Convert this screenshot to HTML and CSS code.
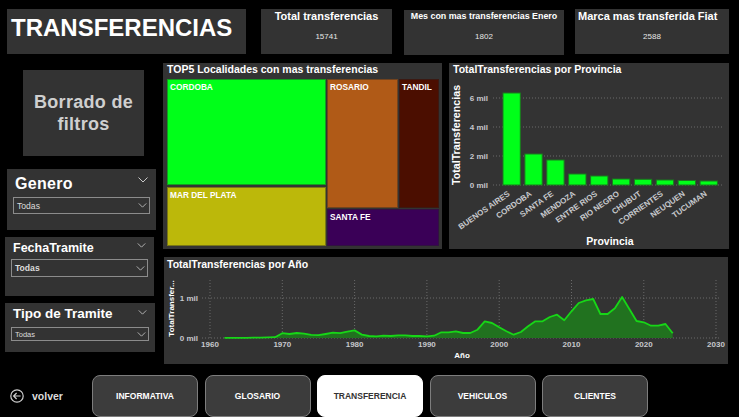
FILE: index.html
```html
<!DOCTYPE html>
<html lang="es">
<head>
<meta charset="utf-8">
<title>Transferencias</title>
<link rel="stylesheet" href="styles.css">
</head>
<body>
<div class="page">
  <header class="top">
    <div class="title-box"><h1>TRANSFERENCIAS</h1></div>
    <div class="kpi kpi-1"><div class="kpi-title">Total transferencias</div><div class="kpi-value">15741</div></div>
    <div class="kpi kpi-2"><div class="kpi-title">Mes con mas transferencias Enero</div><div class="kpi-value">1802</div></div>
    <div class="kpi kpi-3"><div class="kpi-title">Marca mas transferida Fiat</div><div class="kpi-value">2588</div></div>
  </header>

  <main class="main">
    <aside class="side">
      <div class="reset">Borrado de<br>filtros</div>

      <div class="slicer slicer-genero">
        <div class="slicer-head">
          <span class="slicer-title">Genero</span>
          <svg class="chev" width="10" height="6" viewBox="0 0 10 6"><polyline points="0.5,0.5 5,5 9.5,0.5"/></svg>
        </div>
        <div class="dropdown"><span>Todas</span><svg class="chev" width="10" height="6" viewBox="0 0 10 6"><polyline points="0.5,0.5 5,5 9.5,0.5"/></svg></div>
      </div>

      <div class="slicer slicer-fecha">
        <div class="slicer-head">
          <span class="slicer-title">FechaTramite</span>
          <svg class="chev" width="9" height="5" viewBox="0 0 10 6"><polyline points="0.5,0.5 5,5 9.5,0.5"/></svg>
        </div>
        <div class="dropdown"><span>Todas</span><svg class="chev" width="10" height="6" viewBox="0 0 10 6"><polyline points="0.5,0.5 5,5 9.5,0.5"/></svg></div>
      </div>

      <div class="slicer slicer-tipo">
        <div class="slicer-head">
          <span class="slicer-title">Tipo de Tramite</span>
          <svg class="chev" width="9" height="5" viewBox="0 0 10 6"><polyline points="0.5,0.5 5,5 9.5,0.5"/></svg>
        </div>
        <div class="dropdown"><span>Todas</span><svg class="chev" width="10" height="6" viewBox="0 0 10 6"><polyline points="0.5,0.5 5,5 9.5,0.5"/></svg></div>
      </div>
    </aside>

    <section class="charts">
      <div class="panel treemap">
        <div class="panel-title">TOP5 Localidades con mas transferencias</div>
        <div class="tm-area">
          <div class="tm-left">
            <div class="tile t-cordoba">CORDOBA</div>
            <div class="tile t-mdp">MAR DEL PLATA</div>
          </div>
          <div class="tm-right">
            <div class="tm-top">
              <div class="tile t-rosario">ROSARIO</div>
              <div class="tile t-tandil">TANDIL</div>
            </div>
            <div class="tile t-santafe">SANTA FE</div>
          </div>
        </div>
      </div>

      <div class="panel bars">
        <svg width="280" height="186" viewBox="0 0 280 186">
          <text class="ttl" x="4" y="10">TotalTransferencias por Provincia</text>
          <text class="axis-title" font-size="10.7" text-anchor="middle" transform="translate(11,72) rotate(-90)">TotalTransferencias</text>
          <g class="grid">
            <line x1="44" y1="35" x2="275" y2="35"/>
            <line x1="44" y1="64" x2="275" y2="64"/>
            <line x1="44" y1="93" x2="275" y2="93"/>
            <line x1="44" y1="122" x2="275" y2="122"/>
          </g>
          <g class="tick" text-anchor="end">
            <text x="39" y="38">6 mil</text>
            <text x="39" y="67">4 mil</text>
            <text x="39" y="96">2 mil</text>
            <text x="39" y="125">0 mil</text>
          </g>
          <g class="bar">
            <rect x="54" y="30" width="17.3" height="92"/>
            <rect x="75.9" y="91" width="17.3" height="31"/>
            <rect x="97.8" y="97" width="17.3" height="25"/>
            <rect x="119.7" y="111" width="17.3" height="11"/>
            <rect x="141.6" y="113" width="17.3" height="9"/>
            <rect x="163.5" y="116" width="17.3" height="6"/>
            <rect x="185.4" y="116.3" width="17.3" height="5.7"/>
            <rect x="207.3" y="117" width="17.3" height="5"/>
            <rect x="229.2" y="117.5" width="17.3" height="4.5"/>
            <rect x="251.1" y="118" width="17.3" height="4"/>
          </g>
          <g class="tick" text-anchor="end">
            <text transform="translate(61.4,132) rotate(-35)">BUENOS AIRES</text>
            <text transform="translate(83.3,132) rotate(-35)">CORDOBA</text>
            <text transform="translate(105.2,132) rotate(-35)">SANTA FE</text>
            <text transform="translate(127.1,132) rotate(-35)">MENDOZA</text>
            <text transform="translate(149,132) rotate(-35)">ENTRE RIOS</text>
            <text transform="translate(170.9,132) rotate(-35)">RIO NEGRO</text>
            <text transform="translate(192.8,132) rotate(-35)">CHUBUT</text>
            <text transform="translate(214.7,132) rotate(-35)">CORRIENTES</text>
            <text transform="translate(236.6,132) rotate(-35)">NEUQUEN</text>
            <text transform="translate(258.5,132) rotate(-35)">TUCUMAN</text>
          </g>
          <text class="axis-title" font-size="10.5" x="161" y="182" text-anchor="middle">Provincia</text>
        </svg>
      </div>

      <div class="panel line">
        <svg width="564" height="107" viewBox="0 0 564 107">
          <text class="ttl" x="3" y="11">TotalTransferencias por Año</text>
          <text class="axis-title" font-size="8" text-anchor="middle" transform="translate(9.5,51.5) rotate(-90)">TotalTransfer...</text>
          <g class="grid">
            <line x1="38" y1="41" x2="556" y2="41"/>
            <line x1="38" y1="81" x2="556" y2="81"/>
            <line x1="46" y1="23" x2="46" y2="81"/>
            <line x1="118.3" y1="23" x2="118.3" y2="81"/>
            <line x1="190.6" y1="23" x2="190.6" y2="81"/>
            <line x1="262.9" y1="23" x2="262.9" y2="81"/>
            <line x1="335.2" y1="23" x2="335.2" y2="81"/>
            <line x1="407.5" y1="23" x2="407.5" y2="81"/>
            <line x1="479.8" y1="23" x2="479.8" y2="81"/>
            <line x1="552" y1="23" x2="552" y2="81"/>
          </g>
          <g class="tick" text-anchor="end">
            <text x="34" y="44">1 mil</text>
            <text x="34" y="84">0 mil</text>
          </g>
          <g class="tick" text-anchor="middle">
            <text x="46" y="90">1960</text>
            <text x="118.3" y="90">1970</text>
            <text x="190.6" y="90">1980</text>
            <text x="262.9" y="90">1990</text>
            <text x="335.2" y="90">2000</text>
            <text x="407.5" y="90">2010</text>
            <text x="479.8" y="90">2020</text>
            <text x="552" y="90">2030</text>
          </g>
          <polygon class="area" points="60.46,81 60.46,80.8 67.69,80.8 74.92,80.8 82.15,80.8 89.38,80.7 96.61,80.6 103.84,80.4 111.07,80.2 118.3,76.2 125.53,77 132.76,76 139.99,76.6 147.22,77.8 154.45,78.2 161.68,77 168.91,75.7 176.14,76.2 183.37,74.7 190.6,73.4 197.83,77.6 205.06,79 212.29,79.3 219.52,78.7 226.75,79 233.98,78.3 241.21,78.3 248.44,79 255.67,79 262.9,79.3 270.13,78.7 277.36,75.3 284.59,75.3 291.82,74.3 299.05,76 306.28,76 313.51,72.7 320.74,64.3 327.97,66 335.2,70.3 342.43,74.3 349.66,77.7 356.89,75 364.12,69.3 371.35,64.3 378.58,64.3 385.81,60 393.04,57.7 400.27,63.3 407.5,54.3 414.73,46 421.96,43.3 429.19,42 436.42,57 443.65,57 450.88,51.3 458.11,40 465.34,52 472.57,64 479.8,65.3 487.03,68.7 494.26,68.7 501.49,67 508.72,76.3 508.72,81"/>
          <polyline class="trend" points="60.46,80.8 67.69,80.8 74.92,80.8 82.15,80.8 89.38,80.7 96.61,80.6 103.84,80.4 111.07,80.2 118.3,76.2 125.53,77 132.76,76 139.99,76.6 147.22,77.8 154.45,78.2 161.68,77 168.91,75.7 176.14,76.2 183.37,74.7 190.6,73.4 197.83,77.6 205.06,79 212.29,79.3 219.52,78.7 226.75,79 233.98,78.3 241.21,78.3 248.44,79 255.67,79 262.9,79.3 270.13,78.7 277.36,75.3 284.59,75.3 291.82,74.3 299.05,76 306.28,76 313.51,72.7 320.74,64.3 327.97,66 335.2,70.3 342.43,74.3 349.66,77.7 356.89,75 364.12,69.3 371.35,64.3 378.58,64.3 385.81,60 393.04,57.7 400.27,63.3 407.5,54.3 414.73,46 421.96,43.3 429.19,42 436.42,57 443.65,57 450.88,51.3 458.11,40 465.34,52 472.57,64 479.8,65.3 487.03,68.7 494.26,68.7 501.49,67 508.72,76.3"/>
          <text class="axis-title" font-size="8" x="298" y="101" text-anchor="middle">Año</text>
        </svg>
      </div>
    </section>
  </main>

  <nav class="nav">
    <div class="back">
      <svg width="14" height="14" viewBox="0 0 14 14"><circle cx="7" cy="7" r="6.2"/><path d="M10.6 7H3.6M6.6 4L3.6 7L6.6 10"/></svg>
      <span>volver</span>
    </div>
    <div class="nav-btns">
      <div class="nav-btn">INFORMATIVA</div>
      <div class="nav-btn">GLOSARIO</div>
      <div class="nav-btn active">TRANSFERENCIA</div>
      <div class="nav-btn">VEHICULOS</div>
      <div class="nav-btn">CLIENTES</div>
    </div>
  </nav>
</div>
</body>
</html>
```

FILE: styles.css
```css
* { box-sizing: border-box; }
html, body { margin: 0; padding: 0; background: #000; }
body {
  width: 739px;
  height: 417px;
  overflow: hidden;
  font-family: "Liberation Sans", Arial, sans-serif;
  color: #fff;
}
.page { width: 739px; height: 417px; display: flex; flex-direction: column; }

/* top row */
.top { display: flex; align-items: flex-start; height: 63px; padding-top: 9px; flex-shrink: 0; }
.title-box {
  margin-left: 7px; width: 239px; height: 45px; background: #333;
  display: flex; align-items: center; padding: 0 0 7px 4px;
}
.title-box h1 { margin: 0; font-size: 24px; font-weight: bold; line-height: 26px; color: #fff; letter-spacing: 0; }
.kpi { height: 45px; background: #333; display: flex; flex-direction: column; align-items: center; }
.kpi-1 { margin-left: 15px; width: 131px; }
.kpi-2 { margin-left: 12px; width: 160px; margin-top: 1px; }
.kpi-3 { margin-left: 11px; width: 154px; align-items: flex-start; padding-left: 3px; }
.kpi-title { font-weight: bold; font-size: 11px; line-height: 13px; margin-top: 1px; white-space: nowrap; }
.kpi-2 .kpi-title { font-size: 8.9px; line-height: 11px; }
.kpi-value { font-size: 8px; line-height: 10px; margin-top: 9px; color: #e6e6e6; }
.kpi-2 .kpi-value { margin-top: 10px; }
.kpi-3 .kpi-value { align-self: center; margin-left: -3px; }

/* main */
.main { display: flex; height: 312px; flex-shrink: 0; }
.side { width: 160px; flex-shrink: 0; display: flex; flex-direction: column; align-items: flex-start; }
.reset {
  margin: 7px 0 0 23px; width: 121px; height: 86px; background: #333;
  display: flex; align-items: center; justify-content: center; text-align: center;
  font-weight: bold; font-size: 18px; line-height: 22px; color: #cfcfcf; letter-spacing: 0.3px;
}
.slicer { background: #333; padding: 0 6px; }
.slicer-head { display: flex; justify-content: space-between; align-items: flex-start; padding-left: 2px; }
.slicer-title { font-weight: bold; color: #fff; white-space: nowrap; }
.chev { display: block; flex-shrink: 0; }
.chev polyline { fill: none; stroke: #c8c8c8; stroke-width: 1; }
.slicer-head .chev { margin-right: 2px; }
.dropdown {
  border: 1px solid #8c8c8c; display: flex; align-items: center; justify-content: space-between;
  padding: 0 2px 0 3px; color: #dcdcdc;
}
.dropdown .chev { width: 9px; height: 5px; }

.slicer-genero { margin: 13px 0 0 7px; width: 149px; height: 61px; padding-top: 5px; }
.slicer-genero .slicer-title { font-size: 16px; line-height: 20px; letter-spacing: 0.3px; }
.slicer-genero .slicer-head { height: 20px; margin-bottom: 3px; }
.slicer-genero .slicer-head .chev { margin-top: 3px; }
.slicer-genero .dropdown { height: 17px; font-size: 8.6px; }

.slicer-fecha { margin: 7px 0 0 5px; width: 149px; height: 59px; padding-top: 4px; }
.slicer-fecha .slicer-title { font-size: 12.5px; line-height: 15px; }
.slicer-fecha .slicer-head { height: 15px; margin-bottom: 3px; }
.slicer-fecha .slicer-head .chev { margin-top: 2px; }
.slicer-fecha .dropdown { height: 18px; font-size: 8.6px; font-weight: bold; }

.slicer-tipo { margin: 7px 0 0 5px; width: 150px; height: 49px; padding-top: 3px; }
.slicer-tipo .slicer-title { font-size: 13.5px; line-height: 16px; }
.slicer-tipo .slicer-head { height: 16px; margin-bottom: 5px; }
.slicer-tipo .slicer-head .chev { margin-top: 4px; }
.slicer-tipo .dropdown { height: 14px; font-size: 7.5px; }

/* charts */
.charts {
  margin-left: 3px; display: grid;
  grid-template-columns: 279px 280px; grid-template-rows: 186px 107px;
  column-gap: 7px; row-gap: 8px; align-content: start;
}
.panel { background: #333; overflow: hidden; }
.panel svg { display: block; }
.line { grid-column: 1 / 3; margin-left: 1px; width: 564px; }

.treemap { padding: 0 3px 3px 4px; }
.panel-title { font-weight: bold; font-size: 10.5px; line-height: 13px; height: 16px; white-space: nowrap; }
.tm-area { display: flex; gap: 1px; height: 167px; }
.tm-left { width: 159px; display: flex; flex-direction: column; gap: 2px; }
.tm-right { width: 112px; display: flex; flex-direction: column; gap: 1px; }
.tm-top { height: 129px; display: flex; gap: 1px; flex-shrink: 0; }
.tile {
  font-weight: bold; font-size: 8.3px; line-height: 10px; color: #fff;
  padding: 3px 0 0 3px; white-space: nowrap; overflow: hidden;
  box-shadow: inset 0 0 0 1px rgba(40, 40, 40, 0.45);
}
.t-cordoba { height: 106px; flex-shrink: 0; background: #00ff19; }
.t-mdp { flex: 1; background: #bcb80a; }
.t-rosario { width: 71px; background: #b05a17; }
.t-tandil { width: 40px; background: #4b0e00; }
.t-santafe { flex: 1; background: #3a0057; }

.ttl { font-family: "Liberation Sans", Arial, sans-serif; font-weight: bold; font-size: 10.5px; fill: #fff; }
.axis-title { font-family: "Liberation Sans", Arial, sans-serif; font-weight: bold; fill: #fff; }
.tick text { font-family: "Liberation Sans", Arial, sans-serif; font-weight: bold; font-size: 8px; fill: #c6c8cc; }
.grid line { stroke: #6a6a6a; stroke-width: 1; stroke-dasharray: 1 2; }
.bar rect { fill: #00ff19; stroke: #1b7a1f; stroke-width: 1; }
.area { fill: #21721f; }
.trend { fill: none; stroke: #17d617; stroke-width: 1.8; stroke-linejoin: round; }

/* nav */
.nav { display: flex; align-items: center; height: 42px; flex-shrink: 0; }
.back { display: flex; align-items: center; gap: 8px; margin-left: 10px; width: 82px; }
.back svg { display: block; }
.back circle, .back path { fill: none; stroke: #cfcfcf; stroke-width: 1.2; }
.back span { font-weight: bold; font-size: 10.5px; color: #dcdcdc; }
.nav-btns { display: flex; gap: 6.5px; height: 42px; }
.nav-btn {
  width: 106px; height: 42px; border: 1px solid #7d7d7d; border-radius: 8px; background: #3c3c3c;
  display: flex; align-items: center; justify-content: center;
  font-weight: bold; font-size: 8.5px; color: #fff; white-space: nowrap;
}
.nav-btn.active { background: #fff; border-color: #fff; color: #333; }
```
